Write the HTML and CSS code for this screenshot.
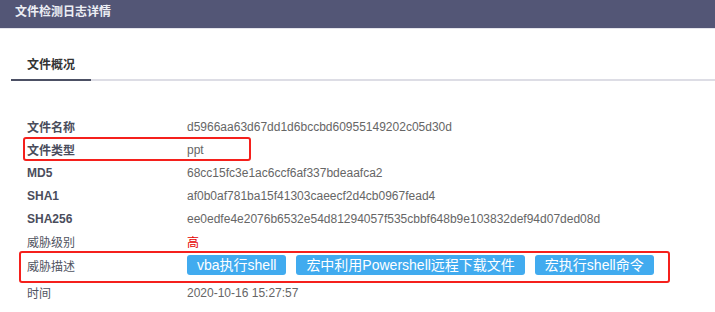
FILE: index.html
```html
<!DOCTYPE html>
<html lang="zh-CN">
<head>
  <meta charset="UTF-8">
  <title>文件检测日志详情</title>
  <link rel="stylesheet" href="styles.css">
</head>
<body>
  <div class="page">
    <div class="header">文件检测日志详情</div>

    <div class="tabs">
      <div class="tab active">文件概况</div>
    </div>

    <div class="info">
      <div class="row">
        <div class="label">文件名称</div>
        <div class="value">d5966aa63d67dd1d6bccbd60955149202c05d30d</div>
      </div>
      <div class="row">
        <div class="label">文件类型</div>
        <div class="value">ppt</div>
      </div>
      <div class="row">
        <div class="label">MD5</div>
        <div class="value">68cc15fc3e1ac6ccf6af337bdeaafca2</div>
      </div>
      <div class="row">
        <div class="label">SHA1</div>
        <div class="value">af0b0af781ba15f41303caeecf2d4cb0967fead4</div>
      </div>
      <div class="row">
        <div class="label">SHA256</div>
        <div class="value">ee0edfe4e2076b6532e54d81294057f535cbbf648b9e103832def94d07ded08d</div>
      </div>
      <div class="row">
        <div class="label light">威胁级别</div>
        <div class="value high">高</div>
      </div>
      <div class="row tags-row">
        <div class="label light">威胁描述</div>
        <div class="value tags">
          <span class="tag">vba执行shell</span>
          <span class="tag">宏中利用Powershell远程下载文件</span>
          <span class="tag">宏执行shell命令</span>
        </div>
      </div>
      <div class="row">
        <div class="label light">时间</div>
        <div class="value">2020-10-16 15:27:57</div>
      </div>
    </div>

    <!-- 标注框 -->
    <div class="mark mark-type"></div>
    <div class="mark mark-desc"></div>
  </div>
</body>
</html>
```

FILE: styles.css
```css
body {
  margin: 0;
  padding: 0;
  background: #fff;
  font-family: "Liberation Sans", Arial, "Noto Sans CJK SC", sans-serif;
  font-size: 12px;
  overflow: hidden;
}

.page {
  position: relative;
  height: 312px;
}

.header {
  height: 29px;
  line-height: 25px;
  padding-left: 15px;
  background: #535676;
  border-bottom: 1px solid #e4e4ec;
  box-sizing: border-box;
  color: #eceef4;
  font-weight: bold;
}

/* 标签页 */
.tabs {
  display: flex;
  margin: 26px 0 0 11px;
  border-bottom: 2px solid #dddde5;
}

.tab {
  padding: 0 16px 4px;
  line-height: 20px;
  color: #333;
  font-weight: bold;
  margin-bottom: -2px;
  border-bottom: 2px solid transparent;
}

.tab.active {
  border-bottom-color: #4c5064;
}

/* 信息列表 */
.info {
  padding: 34px 0 0 27px;
}

.row {
  display: flex;
  align-items: center;
  height: 23px;
}

.label {
  width: 160px;
  flex-shrink: 0;
  color: #4a4d5c;
  font-weight: bold;
}

.label.light {
  font-weight: normal;
  color: #50535f;
}

.value {
  color: #666;
}

.value.high {
  color: #e60000;
}

.tags-row {
  height: auto;
  padding: 2px 0 6px;
}

.tags {
  display: flex;
  gap: 10px;
}

.tag {
  display: inline-block;
  padding: 0 10px;
  height: 20px;
  line-height: 20px;
  font-size: 14px;
  color: #fff;
  background: #41abef;
  border-radius: 3px;
}

/* 红色标注框 */
.mark {
  position: absolute;
  border: 2px solid #f5201c;
  border-radius: 3px;
  box-sizing: border-box;
}

.mark-type {
  left: 23px;
  top: 137px;
  width: 228px;
  height: 24px;
}

.mark-desc {
  left: 19px;
  top: 251px;
  width: 651px;
  height: 32px;
}
```
